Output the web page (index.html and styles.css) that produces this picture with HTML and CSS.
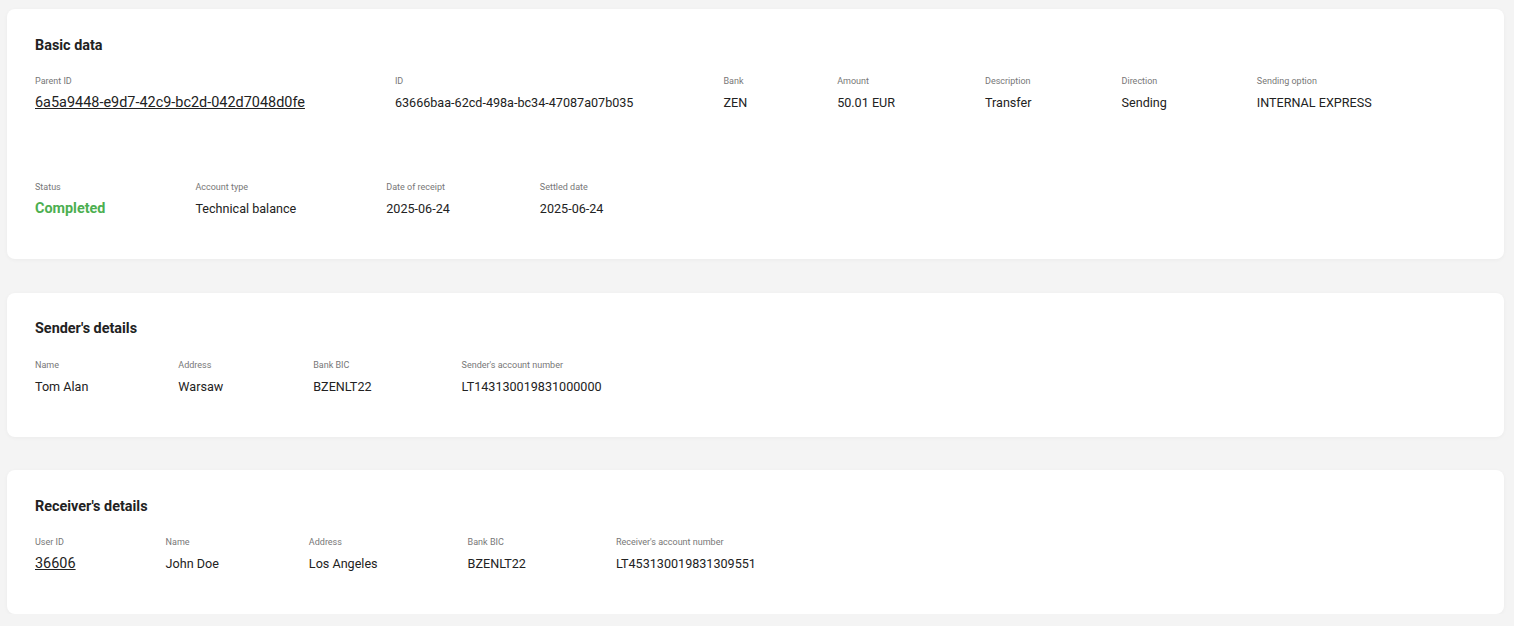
FILE: index.html
```html
<!DOCTYPE html>
<html lang="en">
<head>
  <meta charset="UTF-8" />
  <meta name="viewport" content="width=device-width, initial-scale=1.0"/>
  <title>Transaction details</title>
  <link rel="stylesheet" href="styles.css">
</head>
<body>
  <!-- Basic data -->
  <section class="card">
    <h3>Basic data</h3>
    <div class="fields">
      <div class="field">
        <span class="label">Parent ID</span>
        <a class="value link" href="#">6a5a9448-e9d7-42c9-bc2d-042d7048d0fe</a>
      </div>
      <div class="field">
        <span class="label">ID</span>
        <span class="value">63666baa-62cd-498a-bc34-47087a07b035</span>
      </div>
      <div class="field">
        <span class="label">Bank</span>
        <span class="value">ZEN</span>
      </div>
      <div class="field">
        <span class="label">Amount</span>
        <span class="value">50.01 EUR</span>
      </div>
      <div class="field">
        <span class="label">Description</span>
        <span class="value">Transfer</span>
      </div>
      <div class="field">
        <span class="label">Direction</span>
        <span class="value">Sending</span>
      </div>
      <div class="field">
        <span class="label">Sending option</span>
        <span class="value">INTERNAL EXPRESS</span>
      </div>
    </div>
    <div class="fields second">
      <div class="field">
        <span class="label">Status</span>
        <span class="value status">Completed</span>
      </div>
      <div class="field">
        <span class="label">Account type</span>
        <span class="value">Technical balance</span>
      </div>
      <div class="field">
        <span class="label">Date of receipt</span>
        <span class="value">2025-06-24</span>
      </div>
      <div class="field">
        <span class="label">Settled date</span>
        <span class="value">2025-06-24</span>
      </div>
    </div>
  </section>

  <!-- Sender -->
  <section class="card">
    <h3>Sender's details</h3>
    <div class="fields">
      <div class="field">
        <span class="label">Name</span>
        <span class="value">Tom Alan</span>
      </div>
      <div class="field">
        <span class="label">Address</span>
        <span class="value">Warsaw</span>
      </div>
      <div class="field">
        <span class="label">Bank BIC</span>
        <span class="value">BZENLT22</span>
      </div>
      <div class="field">
        <span class="label">Sender's account number</span>
        <span class="value">LT143130019831000000</span>
      </div>
    </div>
  </section>

  <!-- Receiver -->
  <section class="card">
    <h3>Receiver's details</h3>
    <div class="fields">
      <div class="field">
        <span class="label">User ID</span>
        <a class="value link" href="#">36606</a>
      </div>
      <div class="field">
        <span class="label">Name</span>
        <span class="value">John Doe</span>
      </div>
      <div class="field">
        <span class="label">Address</span>
        <span class="value">Los Angeles</span>
      </div>
      <div class="field">
        <span class="label">Bank BIC</span>
        <span class="value">BZENLT22</span>
      </div>
      <div class="field">
        <span class="label">Receiver's account number</span>
        <span class="value">LT453130019831309551</span>
      </div>
    </div>
  </section>
</body>
</html>
```

FILE: styles.css
```css
* {
  box-sizing: border-box;
}

body {
  font-family: Roboto, "Liberation Sans", Arial, sans-serif;
  margin: 0;
  padding: 9px 10px 0 7px;
  background-color: #f4f4f4;
  color: #222;
  display: flex;
  flex-direction: column;
  gap: 33.5px;
}

.card {
  background-color: #ffffff;
  border-radius: 8px;
  box-shadow: 0 1px 4px rgba(0, 0, 0, 0.04);
  padding: 26.5px 28px 41px;
}

h3 {
  margin: 0;
  font-size: 14.4px;
  line-height: 20px;
  font-weight: 700;
  color: #222;
}

.fields {
  display: flex;
  gap: 90px;
  margin-top: 18.5px;
}

.fields.second {
  margin-top: 68px;
}

.field {
  display: flex;
  flex-direction: column;
}

.label {
  font-size: 9px;
  line-height: 14px;
  color: #777;
}

.value {
  margin-top: 6px;
  font-size: 12.6px;
  line-height: 18px;
  color: #222;
  white-space: nowrap;
}

.value.link {
  font-size: 14.45px;
  color: #222;
  text-decoration: underline;
}

.value.status {
  font-size: 14.4px;
  font-weight: 700;
  color: #4caf50;
}
```
